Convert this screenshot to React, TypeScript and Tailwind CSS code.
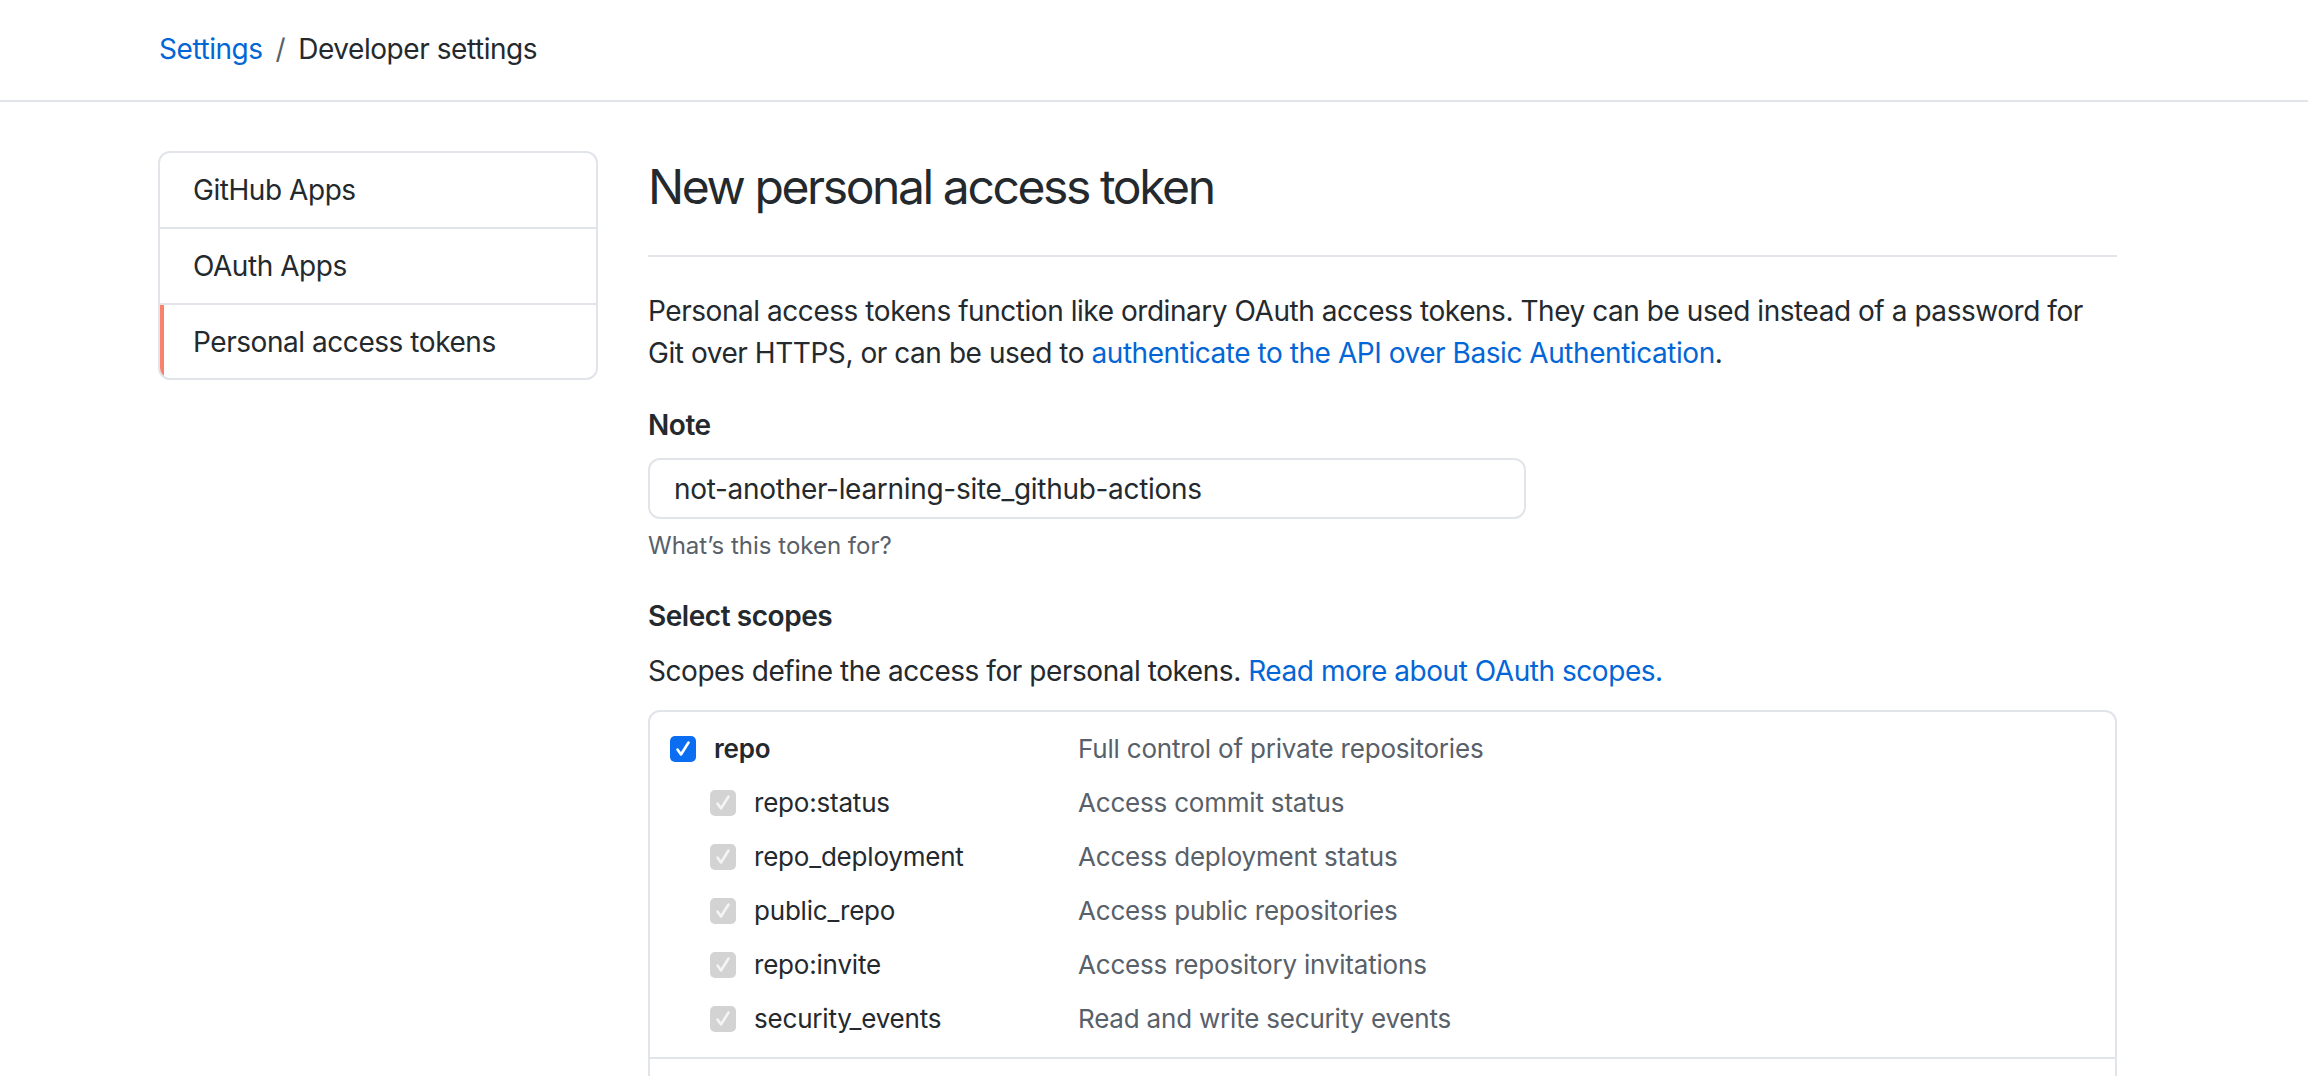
import React from "react";

function Check({ disabled }: { disabled?: boolean }) {
  return (
    <span
      className={
        "flex h-[26px] w-[26px] shrink-0 items-center justify-center rounded-[5px] " +
        (disabled ? "bg-[#d3d3d3]" : "bg-[#0b6ef2]")
      }
    >
      <svg viewBox="0 0 26 26" className="h-[26px] w-[26px]">
        <path
          d="M7.5 13.5 L11 18.5 L18.5 6.5"
          fill="none"
          stroke={disabled ? "#f4f4f4" : "#ffffff"}
          strokeWidth="2.6"
          strokeLinecap="round"
          strokeLinejoin="round"
        />
      </svg>
    </span>
  );
}

const subScopes: [string, string][] = [
  ["repo:status", "Access commit status"],
  ["repo_deployment", "Access deployment status"],
  ["public_repo", "Access public repositories"],
  ["repo:invite", "Access repository invitations"],
  ["security_events", "Read and write security events"],
];

export default function App() {
  return (
    <div className="h-screen overflow-hidden bg-white text-[#24292e] font-[Inter,Liberation_Sans,sans-serif] text-[28px] leading-[42px] tracking-[-0.45px]">
      <header className="flex h-[102px] items-center border-b-2 border-[#e1e4e8] pb-[2px] pl-[159px]">
        <a className="text-[#0366d6]">Settings</a>
        <span className="mx-[13px] text-[#586069]">/</span>
        <span>Developer settings</span>
      </header>

      <div className="flex gap-[50px] pl-[158px] pt-[49px]">
        <nav className="w-[440px] shrink-0">
          <div className="overflow-hidden rounded-[12px] border-2 border-[#e1e4e8]">
            <div className="flex h-[74px] items-center pl-[33px]">GitHub Apps</div>
            <div className="flex h-[76px] items-center border-t-2 border-[#e1e4e8] pl-[33px]">OAuth Apps</div>
            <div className="relative flex h-[75px] items-center border-t-2 border-[#e1e4e8] pl-[33px]">
              <span className="absolute bottom-0 left-0 top-0 w-[4px] bg-[#f9826c]" />
              Personal access tokens
            </div>
          </div>
        </nav>

        <main className="w-[1469px] shrink-0">
          <div className="border-b-2 border-[#e1e4e8] pb-[32px]">
            <h1 className="text-[48px] font-normal leading-[72px] tracking-[-2.4px]">New personal access token</h1>
          </div>

          <p className="mt-[33px]">
            Personal access tokens function like ordinary OAuth access tokens. They can be used instead of a password for
            Git over HTTPS, or can be used to{" "}
            <a className="text-[#0366d6]">authenticate to the API over Basic Authentication</a>.
          </p>

          <div className="mt-[30px]">
            <div className="font-semibold">Note</div>
            <div className="mt-[12px] flex h-[61px] w-[878px] items-center rounded-[12px] border-2 border-[#e1e4e8] px-[24px] tracking-[-0.3px]">
              not-another-learning-site_github-actions
            </div>
            <div className="mt-[10px] text-[24px] leading-[34px] tracking-[0px] text-[#586069]">What’s this token for?</div>
          </div>

          <div className="mt-[32px]">
            <div className="font-semibold">Select scopes</div>
            <p className="mt-[13px]">
              Scopes define the access for personal tokens.{" "}
              <a className="text-[#0366d6]">Read more about OAuth scopes.</a>
            </p>

            <div className="mt-[18px] rounded-[12px] border-2 border-[#e1e4e8] text-[26px] tracking-[-0.2px]">
              <div className="px-[20px] pb-[11px] pt-[10px]">
                <div className="flex h-[54px] items-center">
                  <div className="flex w-[408px] items-center gap-[18px]">
                    <Check />
                    <span className="font-semibold">repo</span>
                  </div>
                  <span className="text-[#586069]">Full control of private repositories</span>
                </div>
                {subScopes.map(([name, desc]) => (
                  <div key={name} className="flex h-[54px] items-center">
                    <div className="flex w-[408px] items-center gap-[18px] pl-[40px]">
                      <Check disabled />
                      <span>{name}</span>
                    </div>
                    <span className="text-[#586069]">{desc}</span>
                  </div>
                ))}
              </div>
              <div className="border-t-2 border-[#e1e4e8] px-[20px] py-[10px]">
                <div className="flex h-[54px] items-center">
                  <div className="flex w-[408px] items-center gap-[18px]">
                    <span className="h-[26px] w-[26px] rounded-[5px] border-2 border-[#8e8e8e]" />
                    <span className="font-semibold">workflow</span>
                  </div>
                  <span className="text-[#586069]">Update GitHub Action workflows</span>
                </div>
              </div>
            </div>
          </div>
        </main>
      </div>
    </div>
  );
}
